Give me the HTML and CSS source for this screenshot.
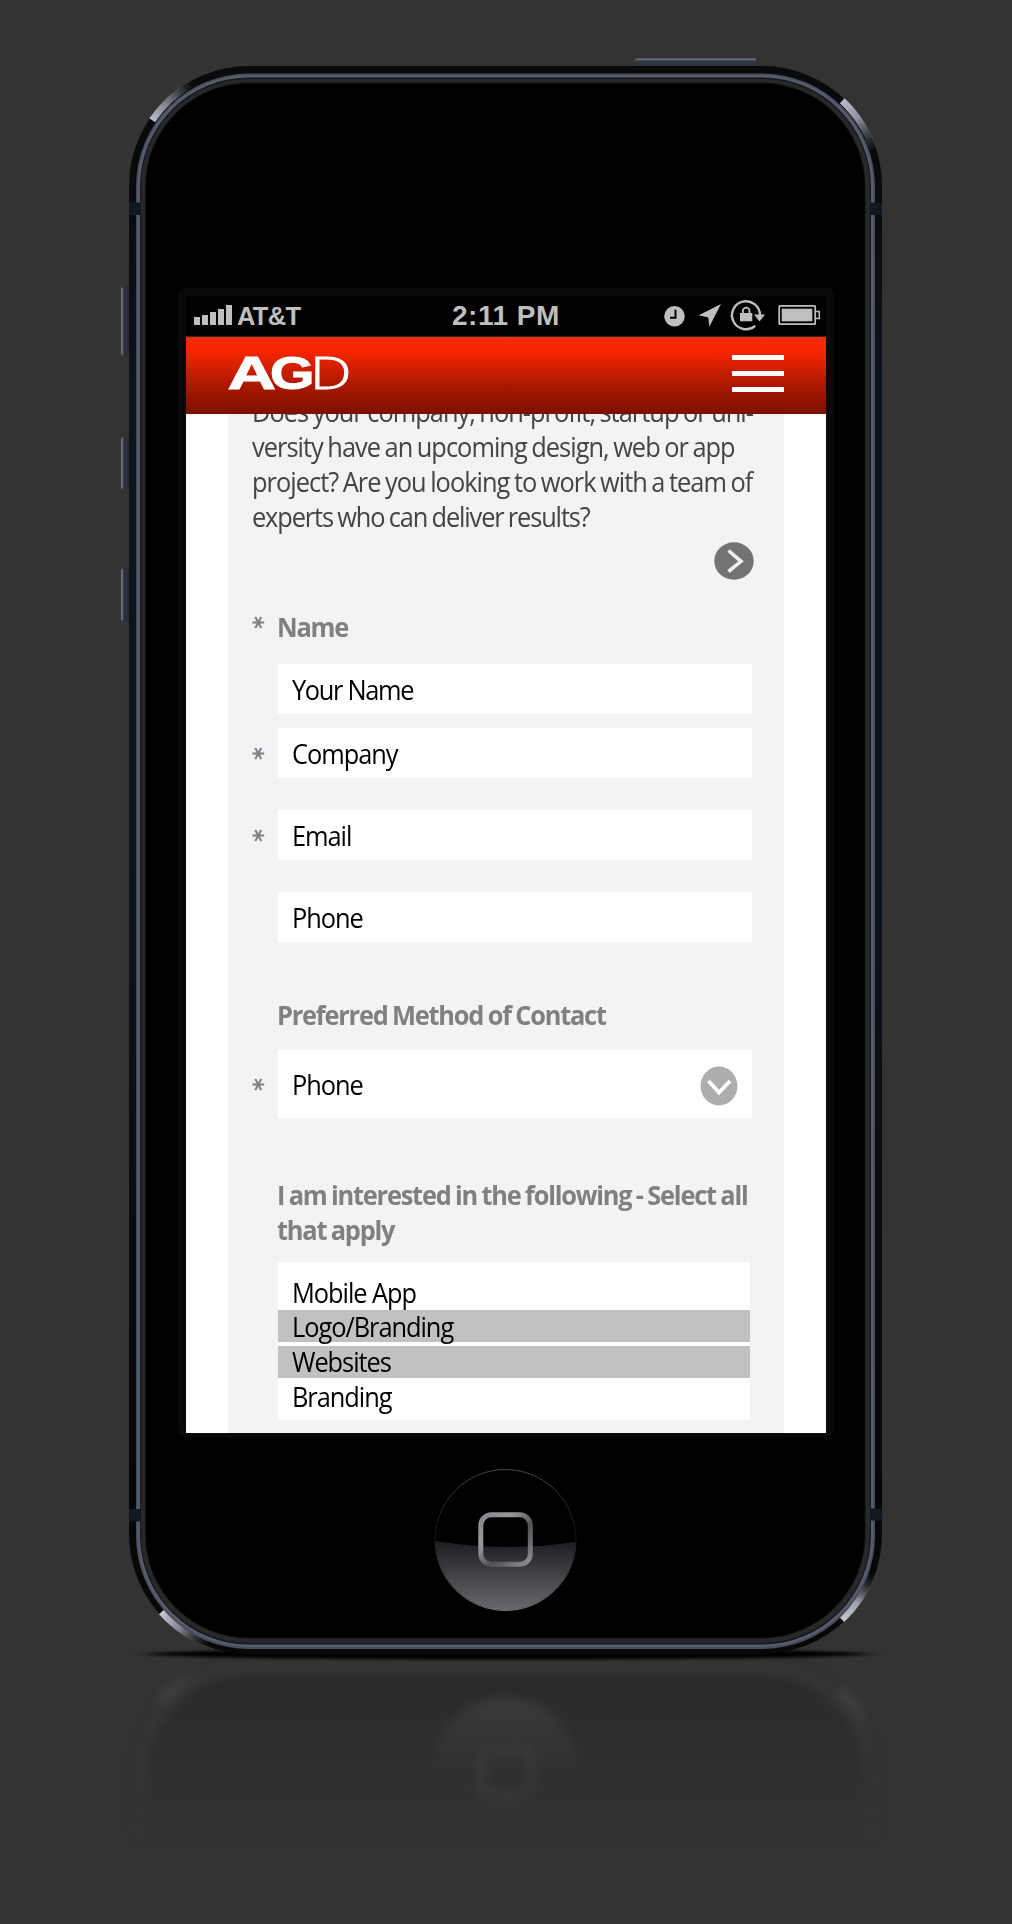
FILE: index.html
```html
<!DOCTYPE html>
<html lang="en">
<head>
<meta charset="utf-8">
<title>AGD Contact</title>
<link rel="stylesheet" href="styles.css">
</head>
<body>
<svg class="device" viewBox="0 0 1012 1924" aria-hidden="true">
  <defs>
    <linearGradient id="tl" gradientUnits="userSpaceOnUse" x1="152" y1="120" x2="191" y2="84"><stop offset="0" stop-color="#b9bbc8"/><stop offset=".4" stop-color="#80838f"/><stop offset="1" stop-color="#80838f" stop-opacity="0"/></linearGradient>
    <linearGradient id="tr" gradientUnits="userSpaceOnUse" x1="842" y1="101" x2="874" y2="151"><stop offset="0" stop-color="#b9bbc8"/><stop offset=".4" stop-color="#8d909c"/><stop offset="1" stop-color="#60636f" stop-opacity="0"/></linearGradient>
    <linearGradient id="bl" gradientUnits="userSpaceOnUse" x1="162" y1="1612" x2="210" y2="1644"><stop offset="0" stop-color="#c3c5d0"/><stop offset=".4" stop-color="#858894"/><stop offset="1" stop-color="#40434f" stop-opacity="0"/></linearGradient>
    <linearGradient id="br" gradientUnits="userSpaceOnUse" x1="842" y1="1620" x2="872" y2="1573"><stop offset="0" stop-color="#c3c5d0"/><stop offset=".4" stop-color="#a0a3ae"/><stop offset="1" stop-color="#40434f" stop-opacity="0"/></linearGradient>
    <linearGradient id="edge" x1="0" y1="0" x2="0" y2="1"><stop offset="0" stop-color="#090a0b"/><stop offset=".06" stop-color="#08090b"/><stop offset=".2" stop-color="#0d141b"/><stop offset=".5" stop-color="#0d141b"/><stop offset=".9" stop-color="#050607"/><stop offset="1" stop-color="#080808"/></linearGradient>
    <linearGradient id="gloss" x1="0" y1="0" x2="0" y2="1"><stop offset="0" stop-color="#1b1c20"/><stop offset="1" stop-color="#6b6c71"/></linearGradient>
    <linearGradient id="rim" x1="0" y1="0" x2="0" y2="1"><stop offset="0" stop-color="#464646"/><stop offset=".45" stop-color="#121212"/><stop offset="1" stop-color="#77787c"/></linearGradient>
    <linearGradient id="glyph" x1="0" y1="0" x2="1" y2="1"><stop offset="0" stop-color="#85868b"/><stop offset=".3" stop-color="#9a9a9c"/><stop offset=".6" stop-color="#505154"/><stop offset="1" stop-color="#8e8e92"/></linearGradient>
    <linearGradient id="side" x1="0" y1="0" x2="1" y2="0"><stop offset="0" stop-color="#7b7e88"/><stop offset=".15" stop-color="#5a5e68"/><stop offset=".3" stop-color="#2b313d"/><stop offset="1" stop-color="#252b36"/></linearGradient>
    <linearGradient id="power" x1="0" y1="0" x2="0" y2="1"><stop offset="0" stop-color="#7b7e88"/><stop offset=".15" stop-color="#5a5e68"/><stop offset=".25" stop-color="#333845"/><stop offset="1" stop-color="#2c323d"/></linearGradient>
    <linearGradient id="fade" gradientUnits="userSpaceOnUse" x1="0" y1="1655" x2="0" y2="1850"><stop offset="0" stop-color="#fff" stop-opacity=".18"/><stop offset="1" stop-color="#fff" stop-opacity="0"/></linearGradient>
    <mask id="fademask" maskUnits="userSpaceOnUse" x="0" y="1655" width="1012" height="269"><rect x="0" y="1655" width="1012" height="269" fill="url(#fade)"/></mask>
    <filter id="soft" filterUnits="userSpaceOnUse" x="0" y="1300" width="1012" height="500"><feGaussianBlur stdDeviation="4.500"/></filter>
    <filter id="shade" filterUnits="userSpaceOnUse" x="0" y="1600" width="1012" height="120"><feGaussianBlur stdDeviation="10 1.800"/></filter>
    <clipPath id="homeclip"><circle cx="505.500" cy="1540" r="70"/></clipPath>
    <clipPath id="floor"><rect x="0" y="1200" width="1012" height="600"/></clipPath>
    <g id="body">
      <rect x="129" y="66" width="753" height="1588" rx="120" fill="url(#edge)"/>
      <g fill="none" stroke-width="7">
        <path d="M152.200 120.200A117 117 0 0 1 191.300 84.200" stroke="url(#tl)"/>
        <path d="M842.200 100.700A117 117 0 0 1 873.600 151" stroke="url(#tr)"/>
        <path d="M161.600 1611.800A117 117 0 0 0 210.400 1644.400" stroke="url(#bl)"/>
        <path d="M841.800 1619.500A117 117 0 0 0 872.200 1573.300" stroke="url(#br)"/>
      </g>
      <rect x="136" y="73.500" width="739" height="1575.500" rx="113" fill="#484d5b"/>
      <rect x="137.500" y="75" width="736" height="1572" rx="111.500" fill="#565c6b"/>
      <rect x="140" y="77.500" width="731" height="1567" rx="109" fill="#14171d"/>
      <rect x="141" y="79" width="729" height="1564" rx="108" fill="#272829"/>
      <rect x="145" y="82.500" width="720.500" height="1556" rx="104" fill="#111"/>
      <rect x="146" y="83.500" width="718.500" height="1554" rx="103" fill="#000"/>
      <path fill="#10191f" d="M129 202.500h11.500v12.500h-11.500zM871 202.500h11v12.500h-11zM129 1509h11.500v12.500h-11.500zM871 1508.500h11v12h-11z"/>
      <circle cx="505.500" cy="1540" r="70.500" fill="#000"/>
      <path clip-path="url(#homeclip)" d="M434 1540.500Q505.500 1553 577 1541.500V1612H434z" fill="url(#gloss)"/>
      <circle cx="505.500" cy="1540" r="70.500" fill="none" stroke="url(#rim)"/>
      <rect x="480.800" y="1514.800" width="49.500" height="49.500" rx="10.500" fill="none" stroke="url(#glyph)" stroke-width="5"/>
    </g>
  </defs>
  <g mask="url(#fademask)"><g transform="matrix(1 0 0 -1 0 3312)" clip-path="url(#floor)"><use href="#body" filter="url(#soft)"/></g></g>
  <ellipse cx="508" cy="1654" rx="362" ry="5.500" fill="#000" filter="url(#shade)"/>
  <g fill="url(#side)"><rect x="121" y="287" width="10" height="68.500" rx="2.500"/><rect x="121" y="437" width="10" height="52" rx="2.500"/><rect x="121" y="568.500" width="10" height="52.500" rx="2.500"/></g>
  <rect x="634.500" y="58.500" width="122" height="10" rx="2.500" fill="url(#power)"/>
  <use href="#body"/>
  <rect x="178" y="288" width="656" height="1149" rx="7" fill="#090909"/>
</svg>

<main class="screen">
  <div class="statusbar">
    <svg class="signal" viewBox="0 0 38 20"><path d="M0 12h6v8H0zM8 10h6v10H8zM16 7h6v13h-6zM24 4h6v16h-6zM32 0h6v20h-6z"/></svg>
    <span class="carrier">AT&amp;T</span>
    <span class="time">2:11 PM</span>
    <svg class="indicators" viewBox="664 298 158 34">
      <circle cx="674.500" cy="316.200" r="10.300"/><path d="M675.500 309.800v8h-5.500" fill="none" stroke="#000" stroke-width="2"/>
      <path d="M721 304l-11.700 22.700-1-9.200-9.600-2.200z"/>
      <path d="M755.200 325.800A14 14 0 1 1 760 315" fill="none" stroke="#bfbfbf" stroke-width="2.400"/><path d="M754 314.500h11l-5.500 7z"/>
      <path d="M740 313h12.300v8.300H740z"/><path d="M742.900 313.500v-2.500a3.300 3.300 0 0 1 6.600 0v2.500" fill="none" stroke="#bfbfbf" stroke-width="1.800"/>
      <rect x="779.200" y="305.800" width="36" height="18.400" rx=".8" fill="none" stroke="#bfbfbf" stroke-width="1.700"/><path d="M781.700 308.700h30.600v12.600h-30.600z"/><path d="M816 311.500h3.300v7H816" fill="none" stroke="#bfbfbf" stroke-width="1.500"/>
    </svg>
  </div>
  <header class="topbar">
    <svg class="logo" viewBox="0 0 122 40"><text class="logo-bold" x="-.5" y="34.200" textLength="48.500" lengthAdjust="spacingAndGlyphs">A</text><text class="logo-bold" x="42" y="34.200" textLength="44.500" lengthAdjust="spacingAndGlyphs">G</text><text class="logo-thin" x="82" y="34.200" textLength="41.500" lengthAdjust="spacingAndGlyphs">D</text></svg>
    <div class="menu"><i></i><i></i><i></i></div>
  </header>
  <div class="viewport">
    <div class="panel">
      <p class="intro"><span>Does your company, non-profit, startup or uni-</span><span>versity have an upcoming design, web or app</span><span>project? Are you looking to work with a team of</span><span class="snug">experts who can deliver results?</span></p>
      <svg class="next" viewBox="0 0 40 38"><ellipse cx="20" cy="19" rx="19.700" ry="18.800" fill="#757273"/><path d="M14.500 8.500L27 19.300 14.500 29.500" fill="none" stroke="#efefef" stroke-width="3.600"/></svg>
      <form class="form">
        <div class="row name-label"><b class="star raised">*</b><label><span>Name</span></label></div>
        <div class="row gap-name"><div class="field"><span class="tight">Your Name</span></div></div>
        <div class="row gap-company"><b class="star">*</b><div class="field"><span>Company</span></div></div>
        <div class="row gap-wide"><b class="star">*</b><div class="field"><span>Email</span></div></div>
        <div class="row gap-wide"><div class="field"><span>Phone</span></div></div>
        <div class="row method-label"><label><span>Preferred Method of Contact</span></label></div>
        <div class="row gap-select"><b class="star">*</b><div class="field select"><span>Phone</span><svg viewBox="0 0 38 40"><ellipse cx="19" cy="20" rx="18.400" ry="19.500" fill="#adadad"/><path d="M8.500 15L19 26.500 30 15" fill="none" stroke="#fff" stroke-width="3.800"/></svg></div></div>
        <div class="row interest-label"><label><span>I am interested in the following - Select all</span><span>that apply</span></label></div>
        <div class="row gap-list"><ul class="options"><li><span>Mobile App</span></li><li class="on first"><span>Logo/Branding</span></li><li class="on"><span>Websites</span></li><li class="last"><span>Branding</span></li></ul></div>
      </form>
    </div>
  </div>
</main>
</body>
</html>
```
FILE: styles.css
```css
* { box-sizing: border-box; }
body {
  margin: 0;
  width: 1012px;
  height: 1924px;
  padding: 296px 186px 0;
  overflow: hidden;
  background: #333;
  position: relative;
  font-family: "Open Sans", "Noto Sans", sans-serif;
}
.device { position: absolute; inset: 0; width: 1012px; height: 1924px; }
.screen {
  position: relative;
  width: 640px;
  height: 1137px;
  overflow: hidden;
  background: #fff;
}

/* status bar */
.statusbar {
  display: flex;
  align-items: center;
  height: 41px;
  padding: 0 4px 2px 8px;
  background: #000;
  border-bottom: 1px solid #2b2b2b;
  color: #bfbfbf;
  fill: #bfbfbf;
  font-family: "Liberation Sans", Arial, sans-serif;
  font-weight: bold;
}
.signal { width: 38px; height: 20px; }
.carrier { width: 215px; margin-left: 5px; padding-top: 2px; font-size: 25.5px; letter-spacing: -.7px; }
.time { flex: 1; padding-top: 1px; font-size: 28px; letter-spacing: .5px; }
.indicators { width: 158px; height: 34px; }

/* header */
.topbar {
  display: flex;
  justify-content: space-between;
  align-items: flex-start;
  height: 77px;
  padding: 18px 42px 0;
  background: linear-gradient(#ff2a00, #f42500 20%, #a81700 65%, #7b1000);
}
.logo { width: 122px; height: 40px; fill: #fff; stroke: #fff; overflow: visible; }
.logo-bold { font: bold 46px "Liberation Sans", Arial, sans-serif; stroke-width: 1px; }
.logo-thin { font: 300 45px "Open Sans", sans-serif; stroke-width: .9px; }
.menu { display: grid; gap: 11px; width: 52px; }
.menu i { height: 5px; background: #fff; }

/* page */
.viewport { height: 1019px; padding: 0 42px; overflow: hidden; }
.panel { height: 1019px; padding: 0 24px; background: #f3f3f3; overflow: hidden; }
.intro { margin: -20px 0 0; color: #444; }
.intro span, label span { display: block; }
.intro, .form { font-size: 27px; line-height: 35px; letter-spacing: -1.03px; word-spacing: -1.2px; white-space: nowrap; }
.form { letter-spacing: -1.1px; word-spacing: 0; }
/* slightly condensed letterforms */
.intro span, .form span { transform: scaleX(.94); transform-origin: 0 0; }
.options span { display: inline-block; }
.intro .snug { letter-spacing: -1.2px; }
.form .tight { letter-spacing: -1.4px; }
.next { display: block; width: 40px; height: 38px; margin: 8px 6px 0 auto; }

.row { display: grid; grid-template-columns: 26px 1fr; width: 500px; align-items: center; }
.row > :last-child { grid-column: 2; }
.name-label { margin-top: 29px; }
.gap-name { margin-top: 20px; }
.gap-company { margin-top: 14px; }
.gap-wide { margin-top: 32px; }
.method-label { margin-top: 55px; }
.gap-select { margin-top: 18px; }
.interest-label { margin-top: 59px; }
.gap-list { margin-top: 15px; }
label { margin-left: -1.5px; color: #808080; font-weight: bold; letter-spacing: -1.28px; word-spacing: -1px; }
.star {
  width: 13px;
  height: 13px;
  margin: 1px 0 0 3px;
  color: #808080;
  font: bold 25px/28px "DejaVu Sans", sans-serif;
  letter-spacing: 0;
  transform: rotate(90deg);
}
.raised { margin-top: -8px; }
.field {
  display: flex;
  align-items: center;
  justify-content: space-between;
  height: 50px;
  padding: 1px 14px 0 14px;
  background: #fff;
  color: #000;
}
.select { height: 68px; padding-top: 0; }
.select svg { width: 38px; height: 40px; margin-top: 3px; }
.options { width: 472px; height: 158px; margin: 0; padding: 13px 0 0; list-style: none; background: #fff; color: #000; }
.options li { height: 35px; padding-left: 14px; }
.options .on { height: 32px; line-height: 32px; background: #c1c1c1; }
.options .first { line-height: 34px; margin-bottom: 4px; }
.options .last { padding-top: 1px; }
```
